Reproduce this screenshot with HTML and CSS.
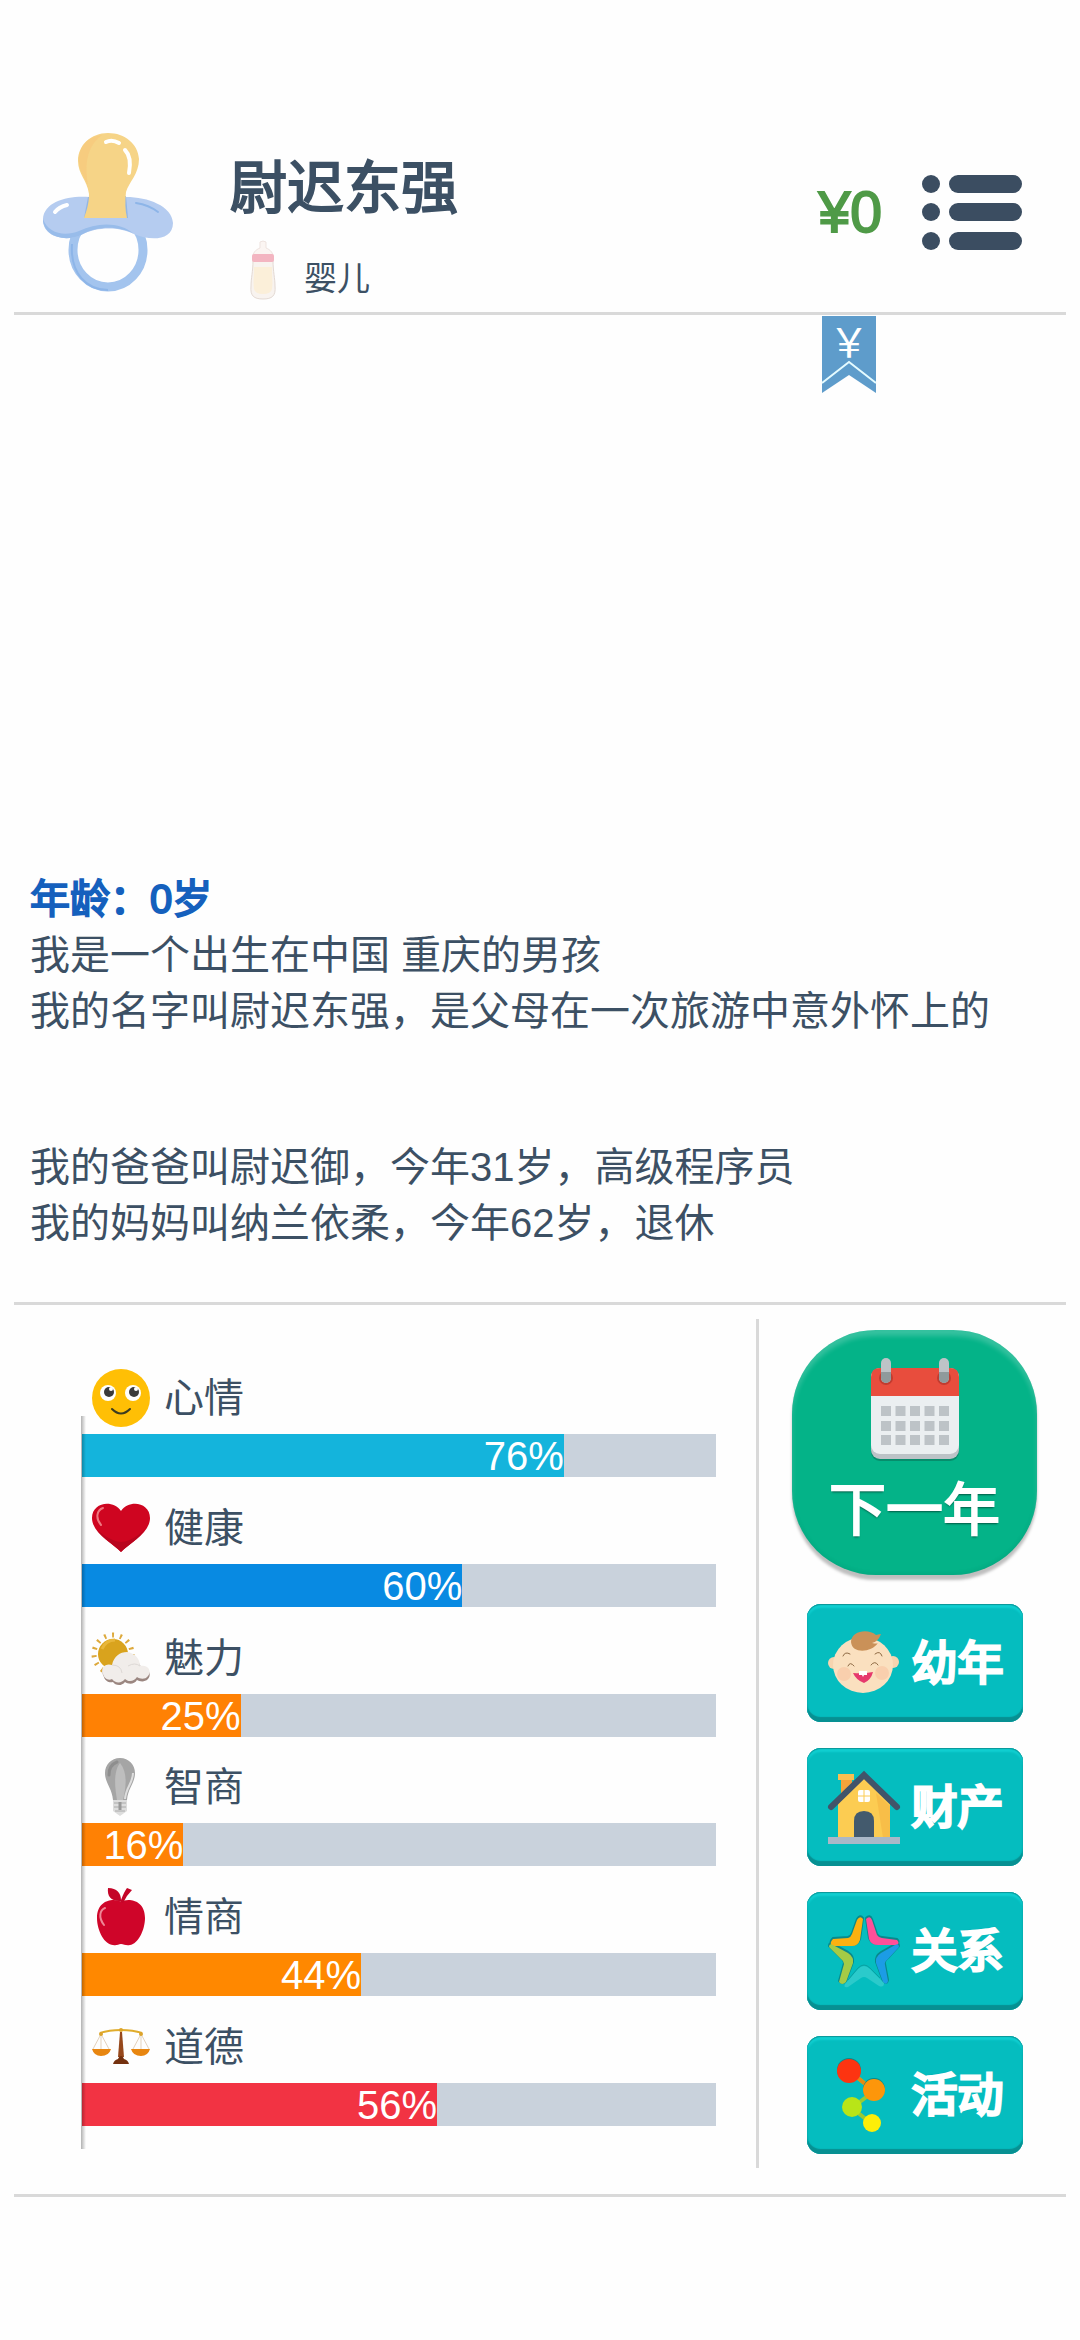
FILE: index.html
```html
<!DOCTYPE html>
<html lang="zh-CN">
<head>
  <meta charset="UTF-8">
  <meta name="viewport" content="width=device-width, initial-scale=1.0">
  <title>尉迟东强</title>
  <link rel="stylesheet" href="styles.css">
</head>
<body>

<header class="header">
  <svg class="avatar" viewBox="0 0 132 160" aria-hidden="true">
    <ellipse cx="66" cy="118" rx="35" ry="37" fill="none" stroke="#a3c4ee" stroke-width="9"/>
    <path d="M30 112 C28 142 45 158 66 158" fill="none" stroke="#8db5e8" stroke-width="2"/>
    <path d="M48 65 C27 63 2 69 1 87 C0 103 21 111 39 103 C56 94 78 95 92 102 C108 109 131 109 131 91 C130 74 106 65 84 65 Z" fill="#b5ccf0"/>
    <path d="M1 87 C1 103 21 111 39 103 C56 93 78 94 92 102 C78 90 56 90 37 99 C22 105 6 101 1 87 Z" fill="#98bcea"/>
    <path d="M46 65 L42 86 L86 86 L84 64 Z" fill="#93b6e4"/>
    <path d="M66 1 C49 1 36 13 36 29 C36 42 45 48 47 62 C47 73 44 80 42 86 H85 C83 78 83 69 84 60 C87 50 97 42 97 27 C96 12 83 1 66 1 Z" fill="#f6d487"/>
    <path d="M60 3 C44 5 36 16 37 31 C38 43 46 48 47 60 C44 42 40 18 60 3 Z" fill="#f9c779" opacity=".6"/>
    <path d="M64 10 Q70 7 77 11 M83 18 Q90 25 87 41" fill="none" stroke="#fff" stroke-width="4" stroke-linecap="round"/>
    <path d="M13 80 Q17 75 25 73" fill="none" stroke="#fff" stroke-width="4" stroke-linecap="round"/>
    <path d="M94 71 Q107 73 116 80" fill="none" stroke="#8db5e8" stroke-width="2" stroke-linecap="round"/>
  </svg>

  <div class="person">
    <h1 class="name">尉迟东强</h1>
    <p class="stage">
      <svg class="bottle" viewBox="0 0 26 60" aria-hidden="true">
        <path d="M10 2 Q13 0 16 2 V8 C21 10 23 13 23 17 H3 C3 13 5 10 10 8 Z" fill="#fbf5f2" stroke="#eee3df"/>
        <path d="M3 20 H23 C23 32 25 38 25 46 C26 56 22 59 13 59 C4 59 0 56 1 46 C1 38 3 32 3 20 Z" fill="#f8f3ef" stroke="#e3d9d3"/>
        <path d="M4 27 H22 C22 38 23 42 22 49 Q21 54 13 54 Q5 54 4 49 C3 42 4 38 4 27 Z" fill="#fbefd9"/>
        <rect x="2" y="14" width="22" height="8" rx="2" fill="#f3b5c1"/>
      </svg>
      <span>婴儿</span>
    </p>
  </div>

  <span class="money">¥0</span>

  <button class="menu" type="button" aria-label="菜单">
    <svg viewBox="0 0 100 75" fill="#3b4d61">
      <circle cx="9" cy="9" r="9"/><rect x="27" y="0" width="73" height="18" rx="9"/>
      <circle cx="9" cy="37" r="9"/><rect x="27" y="28" width="73" height="18" rx="9"/>
      <circle cx="9" cy="66" r="9"/><rect x="27" y="57" width="73" height="18" rx="9"/>
    </svg>
  </button>

  <button class="ribbon" type="button" aria-label="收支">
    <svg viewBox="0 0 54 77">
      <path d="M0 0 H54 V77 L27 59 L0 77 Z" fill="#5e9ccb"/>
      <path d="M0 67 L27 46 L54 67" fill="none" stroke="#e4fbff" stroke-width="2"/>
      <text class="ribbon-text" x="27" y="41">￥</text>
    </svg>
  </button>
</header>

<main class="log">
  <h2 class="age">年龄：0岁</h2>
  <p>我是一个出生在中国 重庆的男孩</p>
  <p>我的名字叫尉迟东强，是父母在一次旅游中意外怀上的</p>
  <div class="family">
    <p>我的爸爸叫尉迟御，今年31岁，高级程序员</p>
    <p>我的妈妈叫纳兰依柔，今年62岁，退休</p>
  </div>
</main>

<section class="panel">
  <ul class="stats">
    <li>
      <div class="stat-head">
        <svg viewBox="0 0 58 58" aria-hidden="true">
          <circle cx="29" cy="29" r="29" fill="#ffbf05"/>
          <circle cx="16" cy="24" r="8" fill="#fff"/><circle cx="41" cy="24" r="8" fill="#fff"/>
          <circle cx="17" cy="23" r="5" fill="#3b3b3b"/><circle cx="42" cy="23" r="5" fill="#3b3b3b"/>
          <circle cx="19" cy="20" r="2" fill="#fff"/><circle cx="44" cy="20" r="2" fill="#fff"/>
          <path d="M20 40 Q29 49 38 40" fill="none" stroke="#3b3b20" stroke-width="2" stroke-linecap="round"/>
        </svg>
        <span id="mood">心情</span>
      </div>
      <div class="bar" role="progressbar" aria-labelledby="mood" aria-valuenow="76"><div class="fill cyan" style="width: 76%">76%</div></div>
    </li>
    <li>
      <div class="stat-head">
        <svg viewBox="0 0 58 58" aria-hidden="true">
          <path d="M29 53 C20 44 0 34 0 19 C0 3 21 0 29 12 C37 0 58 3 58 19 C58 34 38 44 29 53 Z" fill="#cf0520"/>
          <path d="M29 53 C22 46 11 39 5 31 C15 39 23 43 29 43 C36 43 47 37 54 29 C48 39 36 46 29 53 Z" fill="#b8051e"/>
          <path d="M9 26 C3 19 5 11 11 9" fill="none" stroke="#ef7880" stroke-width="2" stroke-linecap="round"/>
        </svg>
        <span id="health">健康</span>
      </div>
      <div class="bar" role="progressbar" aria-labelledby="health" aria-valuenow="60"><div class="fill blue" style="width: 60%">60%</div></div>
    </li>
    <li>
      <div class="stat-head">
        <svg viewBox="0 0 58 58" aria-hidden="true">
          <circle cx="21" cy="25" r="19" fill="none" stroke="#dda93c" stroke-width="5" stroke-dasharray="2 6"/>
          <circle cx="21" cy="25" r="15" fill="#d9a31d"/>
          <path d="M10 20 Q14 11 23 11" fill="none" stroke="#e8b63a" stroke-width="3"/>
          <path d="M12 48 C8 42 13 36 20 38 C23 28 38 24 46 33 C48 35 49 38 49 40 C57 38 60 46 56 50 C52 54 47 52 45 51 C42 56 36 55 33 53 C29 58 23 56 21 53 C17 54 13 52 12 48 Z" fill="#9b8781"/>
          <path d="M11 45 C8 38 14 34 20 36 C22 27 28 23 35 23 C43 24 48 30 48 37 C56 35 60 42 56 47 C53 51 48 50 45 48 C42 53 36 53 33 50 C29 55 23 54 20 50 C16 52 12 49 11 45 Z" fill="#f1edea"/>
          <path d="M20 36 Q29 36 30 44 M36 37 Q43 33 48 37" fill="none" stroke="#ddd8d5" stroke-width="1"/>
        </svg>
        <span id="charm">魅力</span>
      </div>
      <div class="bar" role="progressbar" aria-labelledby="charm" aria-valuenow="25"><div class="fill orange" style="width: 25%">25%</div></div>
    </li>
    <li>
      <div class="stat-head">
        <svg viewBox="0 0 58 58" aria-hidden="true">
          <path d="M28 0 C19 0 13 7 13 15 C13 25 20 30 21 42 H35 C36 30 43 25 43 15 C43 7 37 0 28 0 Z" fill="#a5a5a5"/>
          <path d="M28 5 C21 14 23 30 25 42 H31 C34 29 36 15 28 5 Z" fill="#bebebe"/>
          <path d="M41 15 C41 25 34 29 33 41" fill="none" stroke="#dedede" stroke-width="2"/>
          <path d="M17 17 Q17 7 25 4" fill="none" stroke="#8e8e8e" stroke-width="3" stroke-linecap="round"/>
          <path d="M21 42 H35 V53 L28 58 L21 53 Z" fill="#ddd"/>
          <path d="M22 45 H34 M22 49 H34 M23 53 H33" stroke="#aaa" stroke-width="1"/>
          <path d="M28 44 V52" stroke="#999" stroke-width="3"/>
        </svg>
        <span id="iq">智商</span>
      </div>
      <div class="bar" role="progressbar" aria-labelledby="iq" aria-valuenow="16"><div class="fill orange" style="width: 16%">16%</div></div>
    </li>
    <li>
      <div class="stat-head">
        <svg viewBox="0 0 58 58" aria-hidden="true">
          <path d="M29 14 C23 10 5 11 5 30 C5 43 13 57 21 57 C25 58 26 56 29 56 C32 56 34 58 38 57 C46 56 53 42 53 30 C53 11 35 10 29 14 Z" fill="#cf0529"/>
          <path d="M27 13 C19 13 15 8 16 0 C25 0 29 5 29 12 Q32 4 35 0 L40 2 Q34 8 31 15 Z" fill="#c40528"/>
          <path d="M12 37 C6 29 8 22 13 20" fill="none" stroke="#ee8796" stroke-width="2" stroke-linecap="round"/>
        </svg>
        <span id="eq">情商</span>
      </div>
      <div class="bar" role="progressbar" aria-labelledby="eq" aria-valuenow="44"><div class="fill amber" style="width: 44%">44%</div></div>
    </li>
    <li>
      <div class="stat-head">
        <svg viewBox="0 0 58 58" aria-hidden="true">
          <path d="M9 16 L1 31 M9 16 L17 31 M9 16 V31 M49 16 L41 31 M49 16 L57 31 M49 16 V31" stroke="#e3d2bd" stroke-width="1"/>
          <path d="M8 15 Q17 12 29 12 Q41 12 50 15" fill="none" stroke="#e0ac2b" stroke-width="2"/>
          <circle cx="9" cy="16" r="2" fill="#dca32b"/><circle cx="49" cy="16" r="2" fill="#dca32b"/>
          <circle cx="29" cy="12" r="2" fill="#dca32b"/>
          <path d="M0 31 H19 Q17 38 9 38 Q2 38 0 31 Z M39 31 H58 Q56 38 49 38 Q41 38 39 31 Z" fill="#e88610"/>
          <path d="M28 14 H30 L32 39 H26 Z" fill="#96481c"/>
          <path d="M21 46 Q22 42 26 41 Q27 38 29 38 Q31 38 32 41 Q36 42 37 46 Z" fill="#74310f"/>
        </svg>
        <span id="moral">道德</span>
      </div>
      <div class="bar" role="progressbar" aria-labelledby="moral" aria-valuenow="56"><div class="fill red" style="width: 56%">56%</div></div>
    </li>
  </ul>

  <nav class="actions">
    <button class="next-year" type="button">
      <svg viewBox="0 0 88 102" aria-hidden="true">
        <rect x="0" y="13" width="88" height="90" rx="9" fill="#078d6c"/>
        <rect x="0" y="12" width="88" height="89" rx="9" fill="#bcc3c7"/>
        <rect x="0" y="10" width="88" height="86" rx="9" fill="#ebeff1"/>
        <path d="M0 38 V19 Q0 10 9 10 H79 Q88 10 88 19 V38 Z" fill="#e84d3d"/>
        <circle cx="15" cy="20" r="7" fill="#c03c30"/><circle cx="73" cy="20" r="7" fill="#c03c30"/>
        <rect x="10" y="0" width="10" height="25" rx="5" fill="#bdc3c7"/><rect x="68" y="0" width="10" height="25" rx="5" fill="#bdc3c7"/>
        <path d="M10 14 H20 V20 A5 5 0 0 1 10 20 Z M68 14 H78 V20 A5 5 0 0 1 68 20 Z" fill="#8f9a9c"/>
        <path d="M10 53 H78 M10 68 H78 M10 82 H78" stroke="#bdc3c7" stroke-width="10" stroke-dasharray="10 4.5"/>
      </svg>
      <span>下一年</span>
    </button>

    <button class="action" type="button">
      <svg viewBox="0 0 72 74" aria-hidden="true">
        <circle cx="6" cy="37" r="6" fill="#f6d4af"/><circle cx="65" cy="36" r="6" fill="#f6d4af"/>
        <ellipse cx="35" cy="39" rx="30" ry="28" fill="#fae0bf"/>
        <circle cx="16" cy="48" r="7" fill="#f9cfad"/><circle cx="54" cy="47" r="7" fill="#f9cfad"/>
        <path d="M23 16 C23 5 40 2 48 9 Q52 8 53 8 Q50 16 44 17 Q49 18 50 17 C43 27 24 28 23 16 Z" fill="#ca9158"/>
        <path d="M15 30 Q17 25 22 28 M47 28 Q52 24 54 30" fill="none" stroke="#8e6a44" stroke-width="1" stroke-linecap="round"/>
        <path d="M20 40 Q22 35 26 40 M43 39 Q47 34 50 39" fill="none" stroke="#8e6a44" stroke-width="1" stroke-linecap="round"/>
        <path d="M25 47 Q35 48 45 46 Q43 54 36 57 Q28 54 25 47 Z" fill="#e6396d"/>
        <path d="M31 45 H39 V49 H36 L35 51 L34 49 H31 Z" fill="#fff"/>
      </svg>
      <span>幼年</span>
    </button>
    <button class="action" type="button">
      <svg viewBox="0 0 72 74" aria-hidden="true">
        <path d="M13 6 H24 V27 H13 Z" fill="#f4a33b"/>
        <rect x="10" y="4" width="16" height="6" fill="#fbbf50"/>
        <path d="M10 33 L36 8 L62 33 V68 H10 Z" fill="#fccc52"/>
        <path d="M48 23 L62 36 V68 H55 Z" fill="#f8be48"/>
        <path d="M3 37 L36 5 L69 37" fill="none" stroke="#41546a" stroke-width="6" stroke-linecap="round"/>
        <path d="M26 68 V51 Q26 41 36 41 Q46 41 46 51 V68 Z" fill="#435a6d"/>
        <rect x="30" y="20" width="12" height="12" rx="2" fill="#fff"/>
        <path d="M36 20 V32 M30 26 H42" stroke="#fccc52" stroke-width="1"/>
        <rect x="0" y="67" width="72" height="7" fill="#aab8c8"/>
      </svg>
      <span>财产</span>
    </button>
    <button class="action" type="button">
      <svg viewBox="0 0 72 74" aria-hidden="true">
        <g fill="#08898c" stroke="#08898c" stroke-width="2" stroke-linejoin="round">
          <path d="M29 5 Q32 0 35 4 L32 25 Q30 31 24 31 H4 Q1 28 5 24 L20 23 Q23 22 24 19 Z"/>
          <path d="M38 4 Q42 0 44 5 L49 20 Q51 23 54 23 L69 25 Q72 28 69 30 H50 Q43 30 41 24 Z"/>
          <path d="M1 32 Q1 28 5 30 L20 38 Q26 42 25 48 L18 67 Q14 71 11 67 L16 49 Q16 46 13 44 Z"/>
          <path d="M71 32 Q71 28 67 30 L53 38 Q47 42 48 48 L55 67 Q59 71 60 66 L57 50 Q56 47 60 44 Z"/>
        </g>
        <path d="M29 6 Q32 1 35 5 L32 26 Q30 32 24 32 H4 Q1 29 5 25 L20 24 Q23 23 24 20 Z" fill="#fcb110"/>
        <path d="M38 5 Q42 1 44 6 L49 21 Q51 24 54 24 L69 26 Q72 29 69 31 H50 Q43 31 41 25 Z" fill="#ff4f99"/>
        <path d="M1 33 Q1 29 5 31 L20 39 Q26 43 25 49 L18 68 Q14 72 11 68 L16 50 Q16 47 13 45 Z" fill="#a4cb46"/>
        <path d="M71 33 Q71 29 67 31 L53 39 Q47 43 48 49 L55 68 Q59 72 60 67 L57 51 Q56 48 60 45 Z" fill="#1c9ce5"/>
        <path d="M17 70 L30 55 Q36 49 42 55 L56 69 Q56 74 51 72 L39 64 Q36 62 33 64 L20 73 Q15 74 17 70 Z" fill="#2bcacb"/>
        <path d="M20 66 L30 54 Q36 48 42 54 L52 64" fill="none" stroke="#0aa0a2" stroke-width="1"/>
      </svg>
      <span>关系</span>
    </button>
    <button class="action" type="button">
      <svg viewBox="0 0 72 74" aria-hidden="true">
        <path d="M25 16 L46 33 L24 50 L44 66" fill="none" stroke="#98c936" stroke-width="4"/>
        <path d="M25 16 L46 33" stroke="#e68a13" stroke-width="4"/>
        <circle cx="21" cy="12" r="12" fill="#08898c"/><circle cx="46" cy="31" r="11" fill="#08898c"/>
        <circle cx="21" cy="13" r="12" fill="#fd3411"/>
        <circle cx="46" cy="32" r="11" fill="#fd960a"/>
        <circle cx="24" cy="49" r="10" fill="#b8e518"/>
        <circle cx="44" cy="65" r="9" fill="#fdee08"/>
      </svg>
      <span>活动</span>
    </button>
  </nav>
</section>

</body>
</html>
```
FILE: styles.css
```css
* { box-sizing: border-box; }
body { display: flex; flex-direction: column; min-height: 100vh; margin: 0; padding: 0 14px 143px; background: #fefefe; color: #3c5064; font-family: "Liberation Sans", "Noto Sans CJK SC", sans-serif; font-size: 40px; line-height: 56px; }
h1, h2, p, ul { margin: 0; padding: 0; }
h1, h2 { font-weight: 400; }
ul { list-style: none; }
svg { display: block; overflow: visible; }
button { padding: 0; border: none; background: none; font-family: inherit; cursor: pointer; }

/* header */
.header { position: relative; display: flex; align-items: center; padding: 124px 44px 12px 28px; border-bottom: 3px solid #d9d9d9; }
.avatar { width: 132px; height: 160px; }
.person { flex: 1; padding: 28px 0 0 56px; }
.name { font-size: 57px; line-height: 72px; -webkit-text-stroke: 2px; }
.stage { display: flex; align-items: flex-end; gap: 28px; padding: 16px 0 0 20px; font-size: 33px; line-height: 42px; }
.bottle { width: 26px; height: 60px; }
.money { margin-right: 40px; color: #4f9a47; font-size: 57px; -webkit-text-stroke: 2px; }
.menu { width: 100px; }
.ribbon { position: absolute; top: calc(100% + 4px); right: 190px; width: 54px; }
.ribbon-text { fill: #fff; font-family: "Noto Sans CJK SC", sans-serif; font-size: 40px; text-anchor: middle; }

/* life log */
.log { flex: 1; display: flex; flex-direction: column; justify-content: flex-end; padding: 0 16px 51px; }
.age { color: #1560bd; font-size: 40px; -webkit-text-stroke: 2px; }
.family { margin-top: 100px; }

/* bottom panel */
.panel { display: grid; grid-template-columns: 1fr 310px; border-top: 3px solid #d9d9d9; border-bottom: 3px solid #d9d9d9; }
.stats { position: relative; display: flex; flex-direction: column; justify-content: space-between; margin: 64px 40px 68px 68px; }
.stats::before { content: ""; position: absolute; top: 47px; left: -1px; width: 5px; height: 733px; background: linear-gradient(to right, rgba(0, 0, 0, .3), rgba(0, 0, 0, 0)); }
.stat-head { display: flex; align-items: center; gap: 14px; height: 58px; margin-bottom: 7px; padding-left: 10px; }
.stat-head svg { width: 58px; height: 58px; }
.bar { height: 43px; background: #c9d2dc; }
.fill { height: 100%; color: #fff; line-height: 45px; text-align: right; }
.cyan { background: #14b4dc; }
.blue { background: #088ae2; }
.orange { background: #ff8104; }
.amber { background: #ff8800; }
.red { background: #f23343; }

.actions { display: flex; flex-direction: column; align-items: center; gap: 26px; margin: 14px 0 26px; padding: 11px 0 14px 4px; border-left: 3px solid #d9d9d9; }
.next-year { display: flex; flex-direction: column; align-items: center; width: 245px; height: 245px; margin-bottom: 3px; padding-top: 28px; border-radius: 84px; background: #04b388; box-shadow: inset 0 6px 5px rgba(255, 255, 255, .2), inset 0 -2px 4px rgba(0, 0, 0, .06), 0 5px 3px rgba(0, 0, 0, .25); color: #fff; font-size: 57px; line-height: 72px; text-shadow: 0 2px 2px rgba(0, 0, 0, .5); -webkit-text-stroke: 2px; }
.next-year svg { width: 88px; margin-bottom: 14px; }
.action { display: flex; align-items: center; justify-content: center; gap: 12px; width: 216px; height: 118px; padding-left: 2px; border-radius: 14px; background: #05bdbf; box-shadow: inset 0 1px 1px #0a9496, inset 0 4px 2px #10cfd1, inset 0 -5px 1px #079092, inset 0 0 2px #08888a; color: #fff; font-size: 46px; line-height: 60px; text-shadow: 0 -1px 1px rgba(0, 0, 0, .5); -webkit-text-stroke: 3px; }
.action svg { width: 72px; height: 74px; }
```
